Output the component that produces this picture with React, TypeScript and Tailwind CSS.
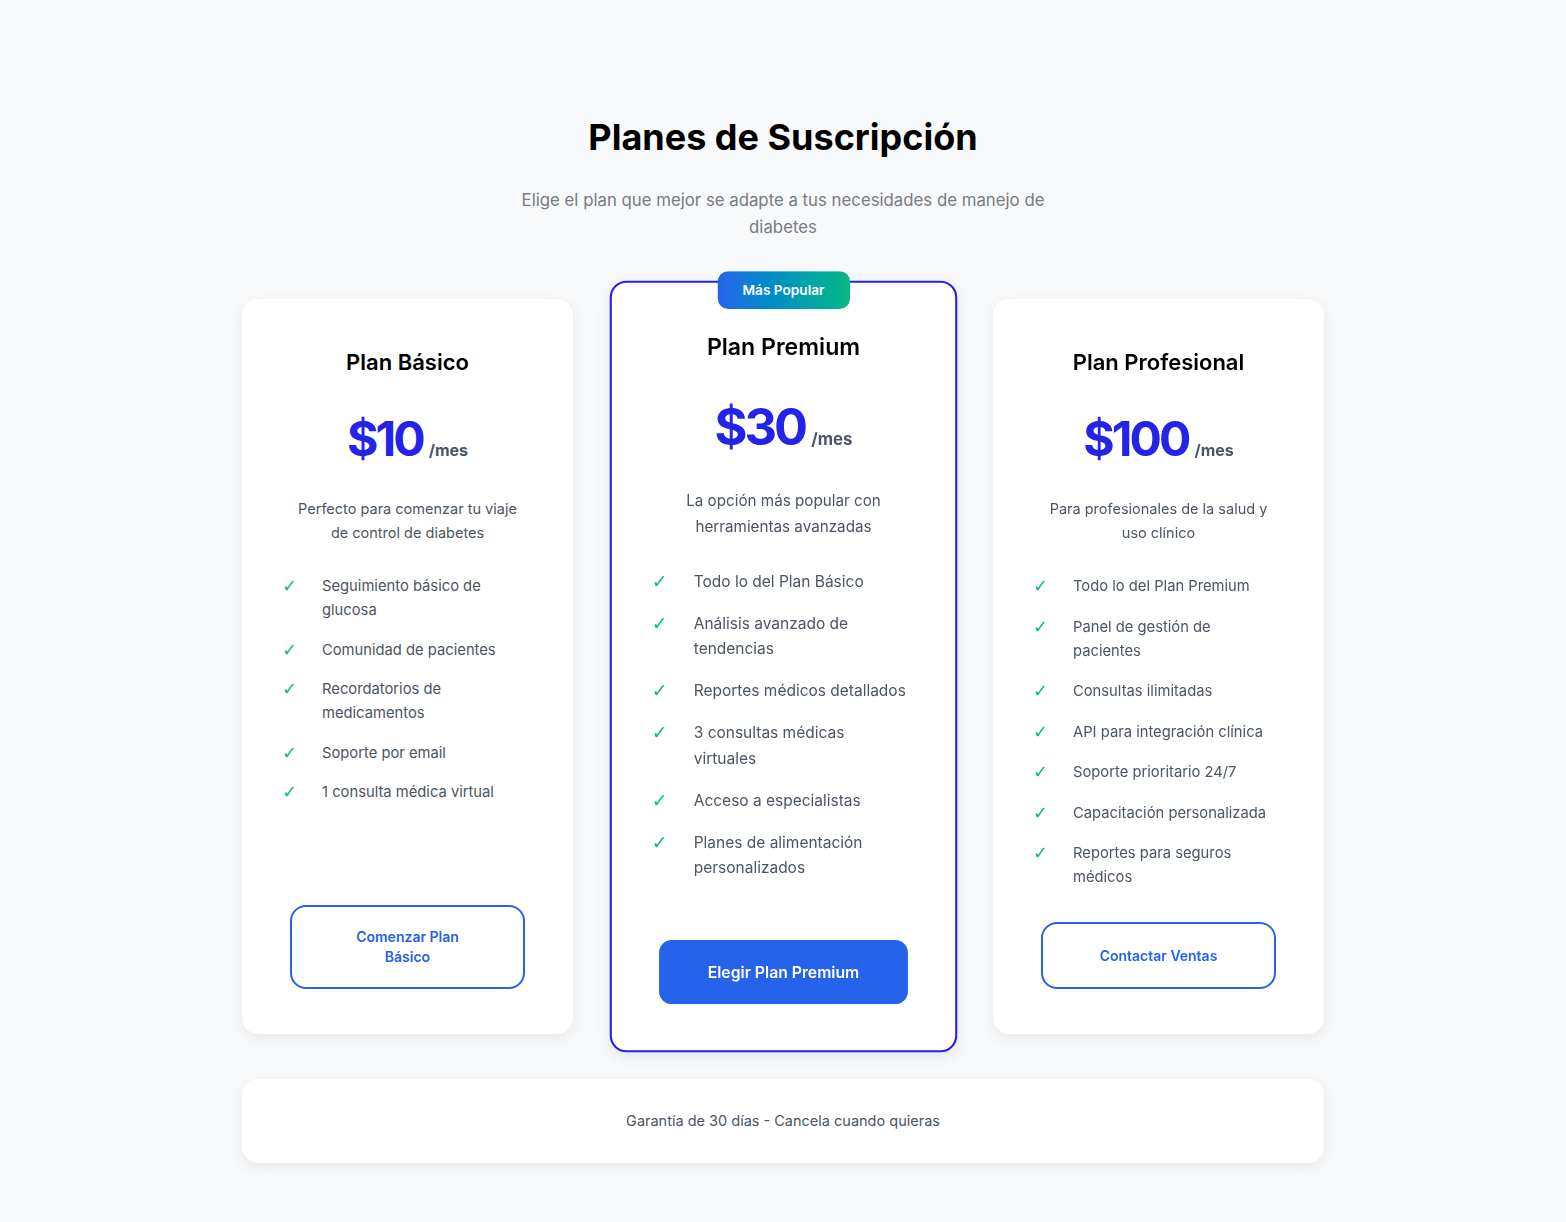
type Plan = {
  name: string;
  price: string;
  description: string;
  features: string[];
  cta: string;
  popular?: boolean;
  listGap: string;
};

const plans: Plan[] = [
  {
    name: "Plan Básico",
    price: "$10",
    description: "Perfecto para comenzar tu viaje de control de diabetes",
    features: [
      "Seguimiento básico de glucosa",
      "Comunidad de pacientes",
      "Recordatorios de medicamentos",
      "Soporte por email",
      "1 consulta médica virtual",
    ],
    cta: "Comenzar Plan Básico",
    listGap: "gap-[15.5px]",
  },
  {
    name: "Plan Premium",
    price: "$30",
    description: "La opción más popular con herramientas avanzadas",
    features: [
      "Todo lo del Plan Básico",
      "Análisis avanzado de tendencias",
      "Reportes médicos detallados",
      "3 consultas médicas virtuales",
      "Acceso a especialistas",
      "Planes de alimentación personalizados",
    ],
    cta: "Elegir Plan Premium",
    popular: true,
    listGap: "gap-[16px]",
  },
  {
    name: "Plan Profesional",
    price: "$100",
    description: "Para profesionales de la salud y uso clínico",
    features: [
      "Todo lo del Plan Premium",
      "Panel de gestión de pacientes",
      "Consultas ilimitadas",
      "API para integración clínica",
      "Soporte prioritario 24/7",
      "Capacitación personalizada",
      "Reportes para seguros médicos",
    ],
    cta: "Contactar Ventas",
    listGap: "gap-[16.5px]",
  },
];

function PlanCard({ plan }: { plan: Plan }) {
  return (
    <div
      className={
        plan.popular
          ? "relative flex flex-col bg-white rounded-2xl border-2 border-[#2424e8] px-[38px] pt-[37px] pb-[44px] scale-105 shadow-[0_4px_14px_rgba(0,0,0,0.08)]"
          : "relative flex flex-col bg-white rounded-2xl px-10 pt-[39px] pb-[45px] shadow-[0_4px_14px_rgba(0,0,0,0.07)]"
      }
    >
      {plan.popular && (
        <div className="absolute -top-[11px] left-1/2 -translate-x-1/2 rounded-[10px] bg-gradient-to-r from-[#2563eb] to-[#10b981] px-6 py-2 text-[13px] leading-5 font-semibold text-white whitespace-nowrap">
          Más Popular
        </div>
      )}

      <h3 className="text-center text-[22px] leading-[48px] font-semibold text-black">{plan.name}</h3>

      <div className="mt-[25px] flex items-baseline justify-center gap-[6px]">
        <span className="text-[48px] leading-[56px] font-bold tracking-[-0.06em] text-[#2424e8]">{plan.price}</span>
        <span className="text-base font-bold text-[#4b5563]">/mes</span>
      </div>

      <p className="mt-[30px] px-3 text-center text-[14.5px] leading-6 text-[#4b5563]">{plan.description}</p>

      {/* Features */}
      <ul className={`mt-[29px] flex flex-col ${plan.listGap}`}>
        {plan.features.map((f) => (
          <li key={f} className="flex items-start text-[14.75px] leading-6 text-[#4b5563]">
            <span className="w-10 shrink-0 font-['DejaVu_Sans',_sans-serif] text-[18px] leading-6 text-[#10b981]">✓</span>
            <span className="pr-[5px]">{f}</span>
          </li>
        ))}
      </ul>

      <div className="mt-auto pt-[33px] flex justify-center">
        {plan.popular ? (
          <button className="w-[237px] rounded-xl border-2 border-[#2563eb] bg-[#2563eb] px-10 py-[18.5px] text-[15px] leading-5 font-semibold text-white">
            {plan.cta}
          </button>
        ) : (
          <button
            className={
              plan.cta.length > 18
                ? "w-[235px] rounded-2xl border-2 border-[#2563eb] bg-white px-12 py-[20px] text-[14px] leading-5 font-semibold text-[#2563eb]"
                : "w-[235px] rounded-2xl border-2 border-[#2563eb] bg-white px-12 py-[21.5px] text-[14px] leading-5 font-semibold text-[#2563eb]"
            }
          >
            {plan.cta}
          </button>
        )}
      </div>
    </div>
  );
}

export default function App() {
  return (
    <div className="min-h-screen bg-[#f8f9fb] font-['Inter',_'Liberation_Sans',_sans-serif]">
      <div className="mx-auto w-[1082px] pt-[113px] pb-[59px]">
        <h1 className="text-center text-[36px] leading-[48px] font-bold text-black">Planes de Suscripción</h1>
        <p className="mx-auto mt-[26px] max-w-[560px] text-center text-[16.8px] leading-[27px] text-[#777b82]">
          Elige el plan que mejor se adapte a tus necesidades de manejo de diabetes
        </p>

        <div className="mt-[58px] grid grid-cols-3 gap-[44.5px]">
          {plans.map((p) => (
            <PlanCard key={p.name} plan={p} />
          ))}
        </div>

        <div className="mt-[45px] rounded-2xl bg-white py-[30px] text-center text-[14.5px] leading-6 text-[#4b5563] shadow-[0_4px_14px_rgba(0,0,0,0.07)]">
          Garantía de 30 días - Cancela cuando quieras
        </div>
      </div>
    </div>
  );
}
